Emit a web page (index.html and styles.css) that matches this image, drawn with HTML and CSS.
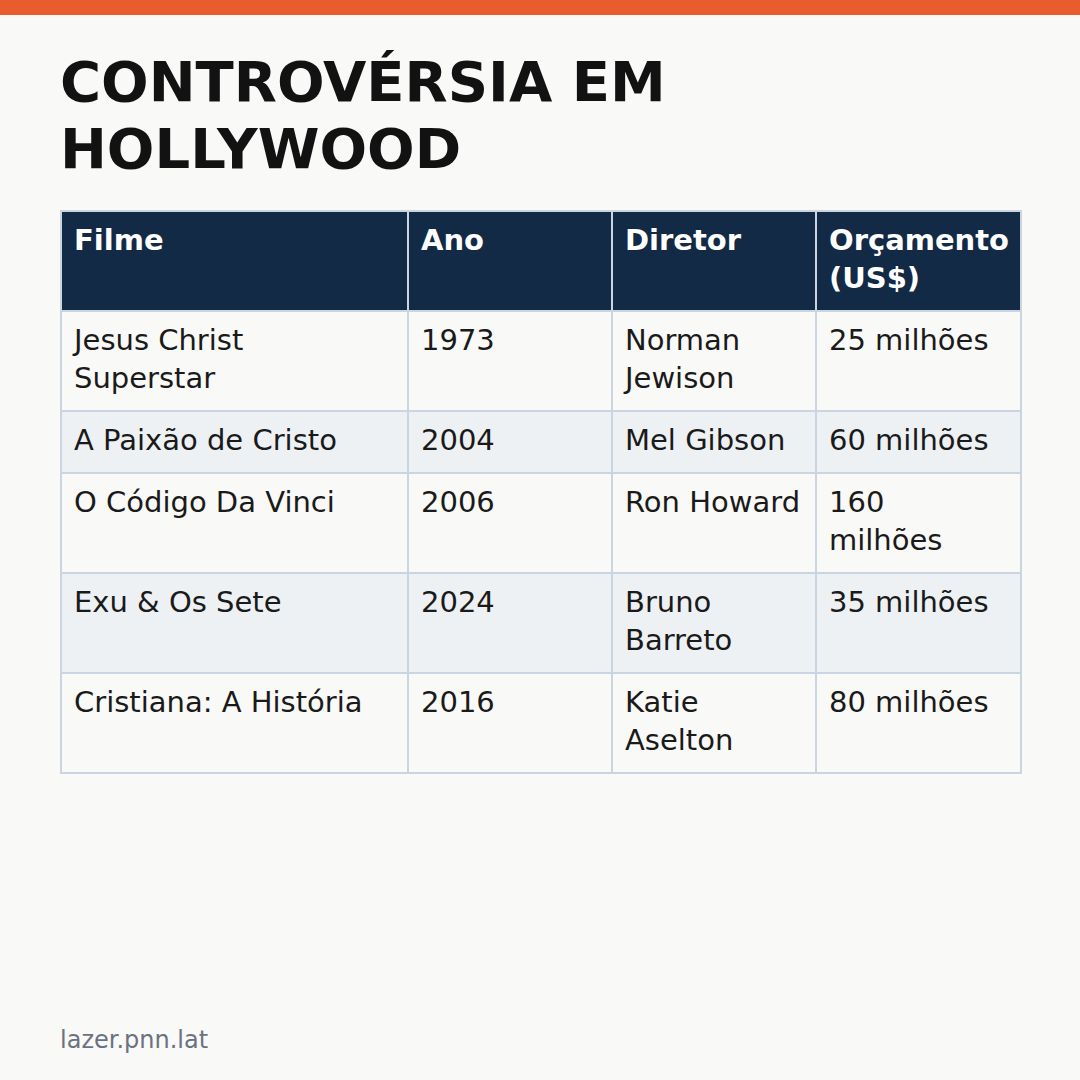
FILE: index.html
```html
<!DOCTYPE html>
<html lang="pt">
<head>
<meta charset="utf-8">
<link rel="stylesheet" href="styles.css">
</head>
<body>
<div class="bar"></div>
<main class="page">
  <h1 class="title">CONTROVÉRSIA EM<br>HOLLYWOOD</h1>
  <table class="films">
    <colgroup>
      <col class="c1"><col class="c2"><col class="c3"><col class="c4">
    </colgroup>
    <thead>
      <tr><th>Filme</th><th>Ano</th><th>Diretor</th><th>Orçamento (US$)</th></tr>
    </thead>
    <tbody>
      <tr><td>Jesus Christ Superstar</td><td>1973</td><td>Norman Jewison</td><td>25 milhões</td></tr>
      <tr><td>A Paixão de Cristo</td><td>2004</td><td>Mel Gibson</td><td>60 milhões</td></tr>
      <tr><td>O Código Da Vinci</td><td>2006</td><td>Ron&nbsp;Howard</td><td>160 milhões</td></tr>
      <tr><td>Exu &amp; Os Sete</td><td>2024</td><td>Bruno Barreto</td><td>35 milhões</td></tr>
      <tr><td>Cristiana: A História</td><td>2016</td><td>Katie Aselton</td><td>80 milhões</td></tr>
    </tbody>
  </table>
  <footer class="foot">lazer.pnn.lat</footer>
</main>
</body>
</html>
```
FILE: styles.css
```css
html, body {
  margin: 0;
  padding: 0;
  background: #f9f9f7;
  font-family: "DejaVu Sans", Verdana, sans-serif;
  color: #1a1a1a;
}
.bar {
  height: 15px;
  background: #e95c2d;
}
.page {
  height: 1065px;
  box-sizing: border-box;
  padding: 33px 60px 0;
  display: flex;
  flex-direction: column;
}
.title {
  margin: 0 0 28px;
  font-size: 56px;
  line-height: 67px;
  font-weight: bold;
  color: #121212;
}
.films {
  width: 960px;
  border-collapse: collapse;
  table-layout: fixed;
  font-size: 29px;
  line-height: 38px;
}
.c1 { width: 347px; }
.c2 { width: 204px; }
.c3 { width: 204px; }
.c4 { width: 205px; }
.films th, .films td {
  border: 2px solid #cbd5e1;
  padding: 9px 16px 13px 12px;
  text-align: left;
  vertical-align: top;
}
.films th {
  background: #122a45;
  color: #ffffff;
  font-weight: bold;
}
.films tbody tr:nth-child(even) td {
  background: #edf1f4;
}
.films tbody tr:nth-child(odd) td {
  background: #f9f9f7;
}
.foot {
  margin-top: auto;
  padding-bottom: 26px;
  font-size: 24px;
  color: #6b7280;
}
```
